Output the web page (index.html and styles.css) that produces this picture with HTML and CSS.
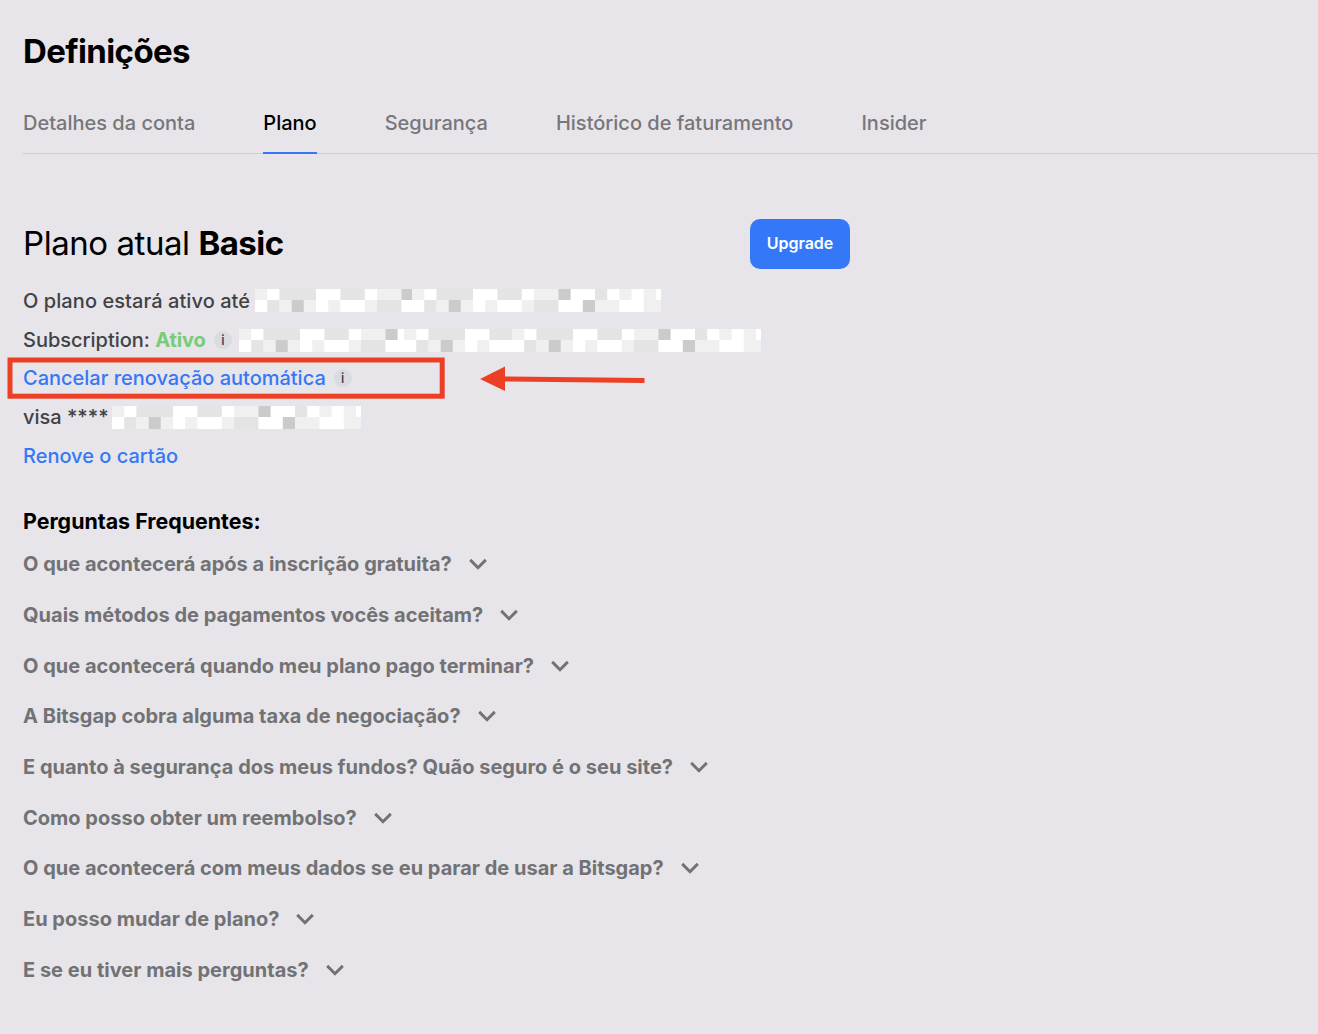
FILE: index.html
```html
<!DOCTYPE html>
<html lang="pt">
<head>
<meta charset="utf-8">
<title>Definições</title>
<link rel="stylesheet" href="styles.css">
</head>
<body>
<svg class="defs" width="0" height="0" aria-hidden="true">
  <symbol id="mosaic" overflow="hidden">
    <rect width="250" height="23" fill="#fff"/>
    <path fill="#f0f0f1" d="M0 0h12.2v11H0zM122 0h24.4v11H122zM207.4 0h12.2v11h-12.2zM231.8 0h12.2v11h-12.2zM24.4 11h12.2v12H24.4zM48.8 11H61v12H48.8zM73.2 11h12.2v12H73.2zM109.8 11H122v12h-12.2zM183 11h24.4v12H183zM231.8 11H249v12h-17.2z"/>
    <path fill="#e4e4e5" d="M24.4 0H61v11H24.4zM85.4 0h24.4v11H85.4zM183 0h12.2v11H183zM12.2 11h12.2v12H12.2zM122 11h24.4v12H122z"/>
    <path fill="#cbcbcc" d="M146.4 0h12.2v11h-12.2zM36.6 11h12.2v12H36.6zM170.8 11H183v12h-12.2z"/>
  </symbol>
  <symbol id="chevron" viewBox="0 0 18 12">
    <path d="M1.2 1.9 9 9.7l7.8-7.8" fill="none" stroke="#727275" stroke-width="2.9"/>
  </symbol>
</svg>
<main class="settings">
  <h1 class="title">Definições</h1>
  <nav class="tabs">
    <a class="tab">Detalhes da conta</a>
    <a class="tab tab-active">Plano</a>
    <a class="tab">Segurança</a>
    <a class="tab">Histórico de faturamento</a>
    <a class="tab">Insider</a>
  </nav>
  <section class="plan">
    <header class="plan-head">
      <h2 class="plan-name">Plano atual <b>Basic</b></h2>
      <button class="upgrade">Upgrade</button>
    </header>
    <div class="row"><span class="until">O plano estará ativo até</span>
      <span class="mosaic"><svg width="157" height="23"><use href="#mosaic"/></svg><svg width="249" height="23"><use href="#mosaic"/></svg></span>
    </div>
    <div class="row"><span class="status">Subscription: <b>Ativo</b></span><i class="info">i</i>
      <span class="mosaic mosaic-sub"><svg width="165" height="23"><use href="#mosaic"/></svg><svg width="108" height="23"><use href="#mosaic"/></svg><svg width="249" height="23"><use href="#mosaic"/></svg></span>
    </div>
    <div class="row"><a class="link">Cancelar renovação automática</a><i class="info">i</i>
      <svg class="highlight" width="439" height="44"><rect x="3" y="4" width="432.200" height="36.200" fill="none" stroke="#ec4026" stroke-width="5"/></svg>
      <svg class="arrow" width="170" height="30" viewBox="0 0 170 30"><path fill="#ec4026" d="M0 13 25 .5V10.500l139.500 1.500v5L25 15.500V25z"/></svg>
    </div>
    <div class="row"><span class="card">visa ****</span>
      <span class="mosaic mosaic-card"><svg width="249" height="23"><use href="#mosaic"/></svg></span>
    </div>
    <div class="row"><a class="link">Renove o cartão</a></div>
  </section>
  <section class="faq">
    <h3 class="faq-title">Perguntas Frequentes:</h3>
    <div class="question"><span>O que acontecerá após a inscrição gratuita?</span><svg class="chevron"><use href="#chevron"/></svg></div>
    <div class="question"><span>Quais métodos de pagamentos vocês aceitam?</span><svg class="chevron"><use href="#chevron"/></svg></div>
    <div class="question"><span>O que acontecerá quando meu plano pago terminar?</span><svg class="chevron"><use href="#chevron"/></svg></div>
    <div class="question"><span>A Bitsgap cobra alguma taxa de negociação?</span><svg class="chevron"><use href="#chevron"/></svg></div>
    <div class="question"><span>E quanto à segurança dos meus fundos? Quão seguro é o seu site?</span><svg class="chevron"><use href="#chevron"/></svg></div>
    <div class="question"><span>Como posso obter um reembolso?</span><svg class="chevron"><use href="#chevron"/></svg></div>
    <div class="question"><span>O que acontecerá com meus dados se eu parar de usar a Bitsgap?</span><svg class="chevron"><use href="#chevron"/></svg></div>
    <div class="question"><span>Eu posso mudar de plano?</span><svg class="chevron"><use href="#chevron"/></svg></div>
    <div class="question"><span>E se eu tiver mais perguntas?</span><svg class="chevron"><use href="#chevron"/></svg></div>
  </section>
</main>
</body>
</html>
```
FILE: styles.css
```css
* { box-sizing: border-box; }
body {
  margin: 0;
  background: #e7e5ea;
  color: #000;
  font-family: Inter, "Liberation Sans", sans-serif;
  overflow: hidden;
}
.defs { display: none; }
.settings { padding: 31px 0 0 23px; }
.title {
  margin: 0;
  font-size: 33px;
  line-height: 40px;
  font-weight: 700;
  letter-spacing: -0.62px;
}
.tabs {
  display: flex;
  gap: 68px;
  height: 61px;
  margin-top: 22px;
  padding-top: 16px;
  box-shadow: inset 0 -1px #cfcdd3;
}
.tab {
  height: 45px;
  font-size: 20px;
  line-height: 28px;
  font-weight: 450;
  letter-spacing: 0;
  color: #77767a;
}
.tab-active { color: #000; box-shadow: inset 0 -2px #3478f7; }
.plan { width: 827px; margin-top: 65px; }
.plan-head {
  display: flex;
  justify-content: space-between;
  align-items: center;
  height: 50px;
  margin-bottom: 12.5px;
}
.plan-name {
  margin: -2px 0 0;
  font-size: 33px;
  line-height: 40px;
  font-weight: 400;
  letter-spacing: -0.45px;
}
b { font-weight: 700; }
.plan-name b { letter-spacing: -0.55px; }
.upgrade {
  width: 100px;
  height: 50px;
  padding: 0 0 2px;
  border: 0;
  border-radius: 10px;
  background: #3478f7;
  color: #fff;
  font: 600 16px/20px Inter, "Liberation Sans", sans-serif;
}
.row {
  position: relative;
  display: flex;
  align-items: center;
  height: 38.75px;
  font-size: 20px;
  font-weight: 450;
  letter-spacing: -0.01px;
  color: #424145;
  white-space: nowrap;
}
.until { width: 227px; letter-spacing: 0.07px; }
.status { width: 183px; }
.card { width: 85px; }
.status b { color: #78cb78; letter-spacing: -0.1px; }
.link { color: #3478f7; }
.mosaic { display: flex; margin-left: 5px; }
.mosaic-sub { margin: 1px 0 0 7px; }
.mosaic-card { margin-left: 4px; }
.info {
  width: 18px;
  height: 18px;
  margin-left: 8px;
  border-radius: 50%;
  background: #d9dbdf;
  color: #35344d;
  font-size: 13px;
  font-style: normal;
  line-height: 18px;
  text-align: center;
}
.highlight { position: absolute; left: -16px; top: -3px; }
.arrow { position: absolute; left: 457px; top: 6.5px; }
.faq-title {
  margin: 33px 0 17px;
  font-size: 21.4px;
  line-height: 26px;
  font-weight: 700;
}
.question {
  display: flex;
  align-items: center;
  gap: 17px;
  height: 26px;
  margin-bottom: 24.7px;
  font-size: 20px;
  font-weight: 700;
  letter-spacing: 0.01px;
  color: #727275;
}
.chevron { width: 18px; height: 12px; }
```
